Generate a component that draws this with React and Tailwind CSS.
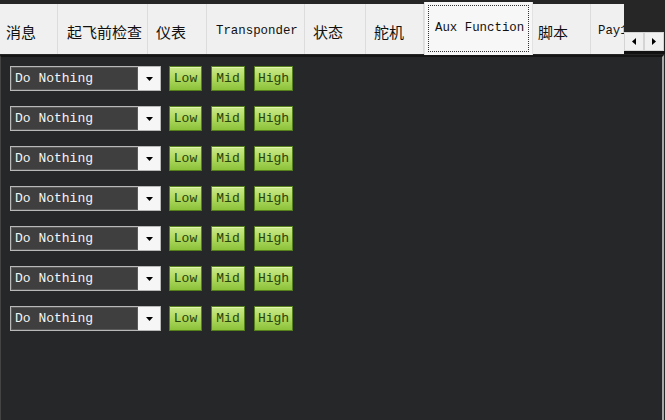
import React from "react";

const tabs = [
  { label: "消息", w: 58, pl: 6, cjk: true },
  { label: "起飞前检查", w: 90, pl: 9, cjk: true },
  { label: "仪表", w: 59, pl: 8, cjk: true },
  { label: "Transponder", w: 98, pl: 9, cjk: false },
  { label: "状态", w: 61, pl: 8, cjk: true },
  { label: "舵机", w: 58, pl: 8, cjk: true },
  { label: "Aux Function", w: 109, pl: 10, cjk: false, sel: true },
  { label: "脚本", w: 58, pl: 5, cjk: true },
  { label: "Pay1oad", w: 60, pl: 7, cjk: false },
];

const mono = { fontFamily: '"Liberation Mono", "DejaVu Sans Mono", monospace' };
const cjk = { fontFamily: '"Noto Sans CJK SC", "Noto Sans", sans-serif' };

function Tab({ t }) {
  if (t.sel) {
    return (
      <div
        className="shrink-0 h-[53px] -mt-[2px] bg-[#f7f7f7] border-l border-r border-[#e2e2e2] flex items-center p-[3px] relative z-10"
        style={{ width: t.w }}
      >
        <div className="w-full h-full border border-dotted border-[#333] flex items-center pl-[6px] text-[12.4px] text-[#111]" style={mono}>
          {t.label}
        </div>
      </div>
    );
  }
  return (
    <div
      className="shrink-0 h-[50px] bg-[#f0f0f0] border-r border-[#dcdcdc] flex items-center pt-[4px] text-[#111] whitespace-nowrap overflow-hidden"
      style={{ width: t.w, paddingLeft: t.pl }}
    >
      {t.cjk ? (
        <span className="text-[15px] leading-none" style={cjk}>{t.label}</span>
      ) : (
        <span className="text-[12.4px] leading-none" style={mono}>{t.label}</span>
      )}
    </div>
  );
}

function Btn({ label, w }) {
  return (
    <div
      className="h-[25px] border border-[#55801c] bg-gradient-to-b from-[#cbe98a] via-[#aed85e] to-[#8cc23a] flex items-center justify-center text-[13px] text-[#2a420a] shadow-[inset_0_1px_0_#e2f5b0]"
      style={{ width: w, ...mono }}
    >
      {label}
    </div>
  );
}

function Row() {
  return (
    <div className="flex items-center h-[25px]">
      <div className="w-[151px] h-[25px] border border-[#b8b8b8] flex">
        <div className="flex-1 bg-[#3f3f3f] border border-[#5a5a5a] flex items-center pl-[3px] text-[13px] text-[#f4f4f4]" style={mono}>
          Do Nothing
        </div>
        <div className="w-[22px] bg-[#f6f6f6] flex items-center justify-center">
          <svg width="7" height="4" viewBox="0 0 7 4"><path d="M0 0H7L3.5 4Z" fill="#000" /></svg>
        </div>
      </div>
      <div className="ml-[8px] flex gap-[9px]">
        <Btn label="Low" w={33} />
        <Btn label="Mid" w={34} />
        <Btn label="High" w={39} />
      </div>
    </div>
  );
}

export default function App() {
  return (
    <div className="w-[665px] h-[420px] bg-[#262626] flex flex-col overflow-hidden">
      <div className="h-[55px] flex shrink-0">
        <div className="w-[624px] pt-[4px] flex overflow-hidden items-start">
          {tabs.map((t, i) => (
            <Tab key={i} t={t} />
          ))}
        </div>
        <div className="w-[41px] flex flex-col pt-[32px]">
          <div className="h-[19px] flex">
            <div className="w-[20px] h-full bg-[#f0f0f0] border border-[#d4d4d4] flex items-center justify-center">
              <svg width="4" height="7" viewBox="0 0 4 7"><path d="M4 0V7L0 3.5Z" fill="#000" /></svg>
            </div>
            <div className="w-[20px] h-full bg-[#f0f0f0] border border-[#d4d4d4] flex items-center justify-center">
              <svg width="4" height="7" viewBox="0 0 4 7"><path d="M0 0V7L4 3.5Z" fill="#000" /></svg>
            </div>
          </div>
          <div className="h-[3px] bg-[#111]" />
        </div>
      </div>
      <div className="flex-1 bg-[#262728] border-t-2 border-t-[#151515] border-l border-l-[#444] border-r-2 border-r-[#a8a8a8] mr-[1px] pl-[9px] pt-[9px] flex flex-col gap-[15px]">
        {Array.from({ length: 7 }).map((_, i) => (
          <Row key={i} />
        ))}
      </div>
    </div>
  );
}
